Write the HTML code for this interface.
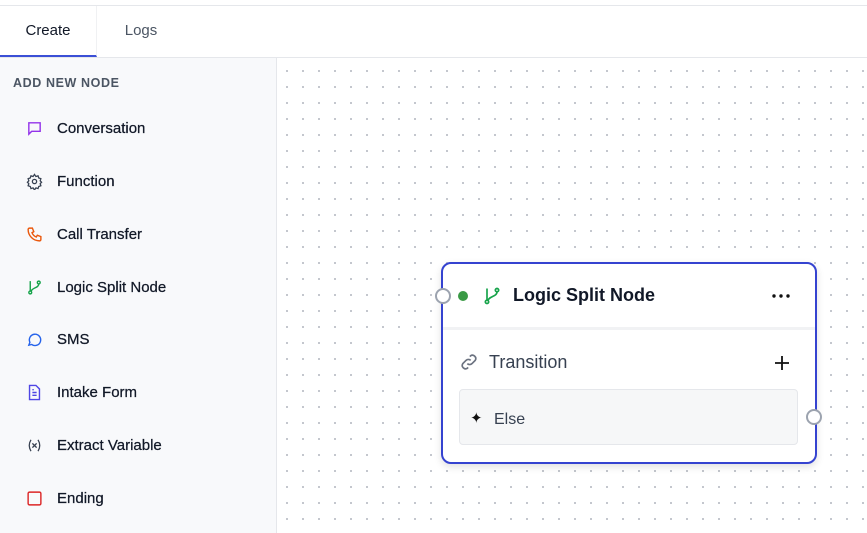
<!DOCTYPE html>
<html><head><style>
*{box-sizing:border-box;margin:0;padding:0}
body{width:867px;height:533px;overflow:hidden;background:#fff;font-family:"Liberation Sans",sans-serif;position:relative}
.topline{position:absolute;left:0;top:5px;width:867px;height:1px;background:#e5e7eb}
.tabs{position:absolute;left:0;top:6px;width:867px;height:52px;border-bottom:1px solid #e5e7eb}
.tab{position:absolute;top:0;height:51px;line-height:49px;font-size:15px}
.t1{left:0;width:97px;text-align:center;color:#111827;border-bottom:2px solid #3b4fd6;border-right:1px solid #f0f1f3}
.t2{left:97px;width:88px;text-align:center;color:#4b5563}
.side{position:absolute;left:0;top:58px;width:277px;height:475px;background:#f8f9fb;border-right:1px solid #e5e7eb}
.hd{position:absolute;left:13px;top:18px;font-size:12.5px;font-weight:bold;letter-spacing:.6px;color:#4b5563}
.item{position:absolute;left:26px;height:20px;font-size:15px;color:#111827;display:flex;align-items:center;-webkit-text-stroke:0.25px #111827}
.item svg{width:17px;height:17px;margin-right:14px;-webkit-text-stroke:0}
.canvas{position:absolute;left:277px;top:58px;width:590px;height:475px;background-image:radial-gradient(circle,#b8bcc4 0.8px,transparent 1.2px);background-size:16px 16px;background-position:2px 5px}
.node{position:absolute;left:441px;top:262px;width:376px;height:202px;border:2px solid #3543d0;border-radius:10px;background:#fff;box-shadow:0 3px 8px rgba(0,0,0,.12)}
.nh{position:absolute;left:0;top:0;width:100%;height:66px;border-bottom:3px solid #f1f2f4}
.port{position:absolute;width:16px;height:16px;border:2px solid #9ca3af;border-radius:50%;background:#fff}
.else{position:absolute;left:16px;top:125px;width:339px;height:56px;background:#f6f7f8;border:1px solid #e5e7eb;border-radius:4px}
</style></head><body>
<div class="topline"></div>
<div class="tabs"><div class="tab t1">Create</div><div class="tab t2">Logs</div></div>
<div class="side">
<div class="hd">ADD NEW NODE</div>
<div class="item" style="top:60px"><svg viewBox="0 0 24 24" fill="none" stroke="#9333ea" stroke-width="2"><path d="M4 4h16v12H8l-4 4z"/></svg>Conversation</div>
<div class="item" style="top:113px"><svg viewBox="0 0 24 24" fill="none" stroke="#374151" stroke-width="1.8"><circle cx="12" cy="12" r="3"/><path d="M12 2l2 3 3-1 1 3 3 1-1 3 2 2-2 2 1 3-3 1-1 3-3-1-2 3-2-3-3 1-1-3-3-1 1-3-2-2 2-2-1-3 3-1 1-3 3 1z"/></svg>Function</div>
<div class="item" style="top:166px"><svg viewBox="0 0 24 24" fill="none" stroke="#ea580c" stroke-width="2"><path d="M5 3h4l2 5-2.5 1.5a11 11 0 0 0 6 6L16 13l5 2v4a2 2 0 0 1-2 2A16 16 0 0 1 3 5a2 2 0 0 1 2-2z"/></svg>Call Transfer</div>
<div class="item" style="top:219px"><svg viewBox="0 0 24 24" fill="none" stroke="#16a34a" stroke-width="2"><circle cx="6" cy="19" r="2"/><circle cx="18" cy="5" r="2"/><path d="M6 3v14M18 7c0 6-10 5-11 11"/></svg>Logic Split Node</div>
<div class="item" style="top:271px"><svg viewBox="0 0 24 24" fill="none" stroke="#2563eb" stroke-width="2"><path d="M4 20l1.5-4A8 8 0 1 1 8 19z"/></svg>SMS</div>
<div class="item" style="top:324px"><svg viewBox="0 0 24 24" fill="none" stroke="#4f46e5" stroke-width="2"><path d="M5 2h9l5 5v15H5z"/><path d="M9 12h6M9 16h6M9 8h2"/></svg>Intake Form</div>
<div class="item" style="top:377px"><svg viewBox="0 0 24 24" fill="none" stroke="#374151" stroke-width="1.8"><path d="M7 4c-3 5-3 11 0 16M17 4c3 5 3 11 0 16M9 9l6 6M15 9l-6 6"/></svg>Extract Variable</div>
<div class="item" style="top:430px"><svg viewBox="0 0 24 24" fill="none" stroke="#dc2626" stroke-width="2"><rect x="3" y="3" width="18" height="18" rx="2"/></svg>Ending</div>
</div>
<div class="canvas"></div>
<div class="node">
<div class="nh">
<div style="position:absolute;left:15px;top:27px;width:10px;height:10px;border-radius:50%;background:#3a9a45"></div>
<svg style="position:absolute;left:39px;top:22px" width="20" height="20" viewBox="0 0 24 24" fill="none" stroke="#16a34a" stroke-width="2"><circle cx="6" cy="19" r="2"/><circle cx="18" cy="5" r="2"/><path d="M6 3v14M18 7c0 6-10 5-11 11"/></svg>
<div style="position:absolute;left:70px;top:21px;font-size:18px;font-weight:bold;color:#111827">Logic Split Node</div>
<svg style="position:absolute;left:329px;top:30px" width="18" height="4" viewBox="0 0 18 4"><circle cx="2" cy="2" r="1.7" fill="#111"/><circle cx="9" cy="2" r="1.7" fill="#111"/><circle cx="16" cy="2" r="1.7" fill="#111"/></svg>
</div>
<svg style="position:absolute;left:16px;top:88px" width="20" height="20" viewBox="0 0 24 24" fill="none" stroke="#6b7280" stroke-width="2"><path d="M10 14a4 4 0 0 0 5.5 0l4-4a4 4 0 0 0-5.5-5.5l-1 1"/><path d="M14 10a4 4 0 0 0-5.5 0l-4 4a4 4 0 0 0 5.5 5.5l1-1"/></svg>
<div style="position:absolute;left:46px;top:88px;font-size:18px;color:#374151">Transition</div>
<svg style="position:absolute;left:331px;top:91px" width="16" height="16" viewBox="0 0 16 16" stroke="#111" stroke-width="1.8"><path d="M8 1v14M1 8h14"/></svg>
<div class="else"><span style="position:absolute;left:10px;top:19px;font-size:15px;color:#111">✦</span><span style="position:absolute;left:34px;top:21px;font-size:16px;color:#374151">Else</span></div>
</div>
<div class="port" style="left:435px;top:288px"></div>
<div class="port" style="left:806px;top:409px"></div>
</body></html>
